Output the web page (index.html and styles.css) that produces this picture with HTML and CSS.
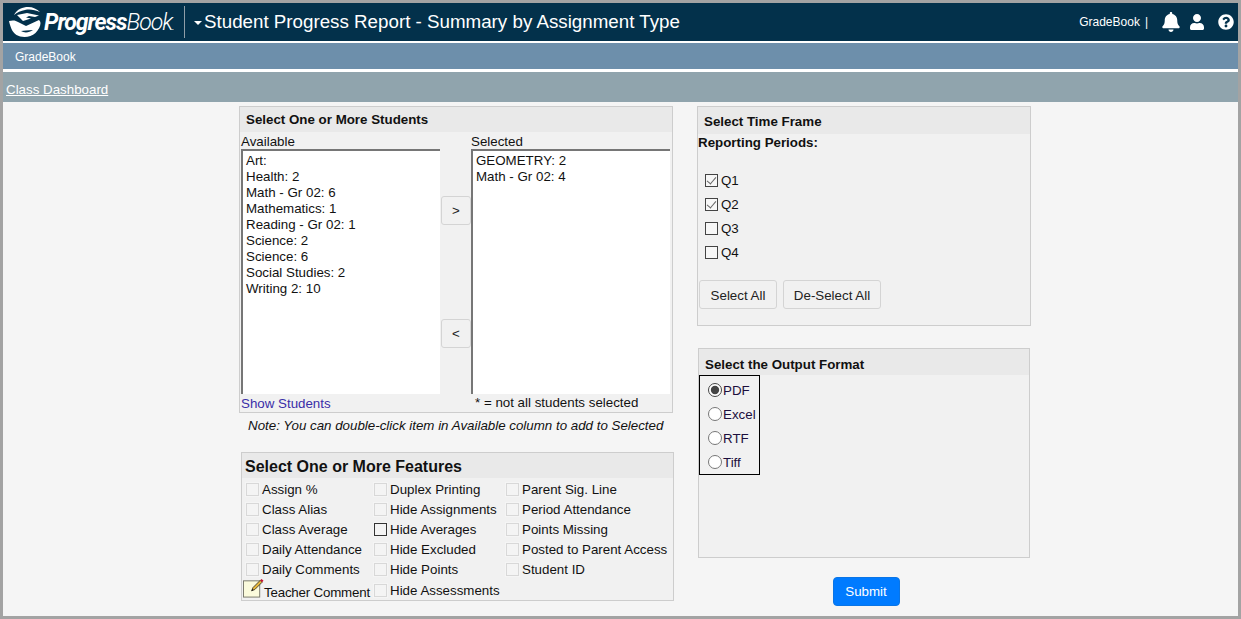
FILE: index.html
```html
<!DOCTYPE html>
<html lang="en">
<head>
    <meta charset="UTF-8">
    <title>Student Progress Report - Summary by Assignment Type</title>
    <link rel="stylesheet" href="styles.css">
</head>
<body>
<div class="page">
    <header class="topbar">
        <div class="logo">
            <svg class="logo-mark" viewBox="0 0 34 32" width="34" height="32">
                <path d="M6 9C9 3 15 1 20 1c5 0 9 2 12 5-5-2-10-3-15-2-4 .8-8 2.500-11 5z" fill="#fff"/>
                <path d="M9 9l10-2 12 2.500-4 1.500-6-1-3 1.500 5 1-8 2.500z" fill="#fff"/>
                <path d="M1 15c4-1 7-.5 9 1l8 4 13-6c1 1 1.500 2 1.500 3 0 3-2 7-5 10-3 2.500-7 4-11 4-6 0-11-3-13-8-1-2.500-2-5.500-2.500-8zm12 10c3 2 8 2 12-1l-7 .5z" fill="#fff" fill-rule="evenodd"/>
            </svg>
            <span class="logo-text"><b>Progress</b>Book<small>.</small></span>
        </div>
        <h1 class="title"><span class="caret"></span>Student Progress Report - Summary by Assignment Type</h1>
        <div class="top-right">
            <span class="app-name">GradeBook</span>
            <span class="sep">|</span>
            <svg class="icon-bell" viewBox="0 0 448 512" width="18" height="20"><path fill="#fff" d="M224 512c35.32 0 63.97-28.65 63.97-64H160.03c0 35.35 28.65 64 63.97 64zm215.39-149.71c-19.32-20.76-55.47-51.99-55.47-154.29 0-77.7-54.48-139.9-127.94-155.16V32c0-17.67-14.32-32-31.98-32s-31.98 14.33-31.98 32v20.84C118.56 68.1 64.08 130.3 64.08 208c0 102.3-36.15 133.53-55.47 154.29-6 6.45-8.66 14.16-8.61 21.71.11 16.4 12.98 32 32.1 32h383.8c19.12 0 32-15.6 32.1-32 .05-7.55-2.61-15.27-8.61-21.71z"/></svg>
            <svg class="icon-user" viewBox="0 0 448 512" width="14" height="16"><path fill="#fff" d="M224 256c70.7 0 128-57.3 128-128S294.7 0 224 0 96 57.3 96 128s57.3 128 128 128zm89.6 32h-16.7c-22.2 10.2-46.9 16-72.9 16s-50.6-5.800-72.900-16h-16.700C60.200 288 0 348.200 0 422.400V464c0 26.500 21.500 48 48 48h352c26.500 0 48-21.500 48-48v-41.600c0-74.200-60.200-134.400-134.400-134.400z"/></svg>
            <svg class="icon-help" viewBox="0 0 512 512" width="16" height="16"><path fill="#fff" d="M504 256c0 136.997-111.043 248-248 248S8 392.997 8 256C8 119.083 119.043 8 256 8s248 111.083 248 248zM262.655 90c-54.497 0-89.255 22.957-116.549 63.758-3.536 5.286-2.353 12.415 2.715 16.258l34.699 26.310c5.205 3.947 12.621 3.008 16.665-2.122 17.864-22.658 30.113-35.797 57.303-35.797 20.429 0 45.698 13.148 45.698 32.958 0 14.976-12.363 22.667-32.534 33.976C247.128 238.528 216 254.941 216 296v4c0 6.627 5.373 12 12 12h56c6.627 0 12-5.373 12-12v-1.333c0-28.462 83.186-29.647 83.186-106.667 0-58.002-60.165-102-116.531-102zM256 338c-25.365 0-46 20.635-46 46 0 25.364 20.635 46 46 46s46-20.636 46-46c0-25.365-20.635-46-46-46z"/></svg>
        </div>
    </header>

    <nav class="subnav">GradeBook</nav>
    <div class="crumb"><a href="#">Class Dashboard</a></div>

    <main class="content">
        <div class="col-left">
            <section class="panel students">
                <div class="panel-head">Select One or More Students</div>
                <div class="picker">
                    <div class="picker-col">
                        <div class="picker-label">Available</div>
                        <div class="listbox">
                            <div>Art:</div>
                            <div>Health: 2</div>
                            <div>Math - Gr 02: 6</div>
                            <div>Mathematics: 1</div>
                            <div>Reading - Gr 02: 1</div>
                            <div>Science: 2</div>
                            <div>Science: 6</div>
                            <div>Social Studies: 2</div>
                            <div>Writing 2: 10</div>
                        </div>
                        <a class="show-link" href="#">Show Students</a>
                    </div>
                    <div class="picker-btns">
                        <button class="btn btn-move">&gt;</button>
                        <button class="btn btn-move">&lt;</button>
                    </div>
                    <div class="picker-col">
                        <div class="picker-label">Selected</div>
                        <div class="listbox">
                            <div>GEOMETRY: 2</div>
                            <div>Math - Gr 02: 4</div>
                        </div>
                        <div class="hint">* = not all students selected</div>
                    </div>
                </div>
            </section>
            <p class="note">Note: You can double-click item in Available column to add to Selected</p>

            <section class="panel features">
                <div class="panel-head head-large">Select One or More Features</div>
                <div class="feature-grid">
                    <label class="feature"><input type="checkbox" class="chk-faint">Assign %</label>
                    <label class="feature"><input type="checkbox" class="chk-faint">Duplex Printing</label>
                    <label class="feature"><input type="checkbox" class="chk-faint">Parent Sig. Line</label>
                    <label class="feature"><input type="checkbox" class="chk-faint">Class Alias</label>
                    <label class="feature"><input type="checkbox" class="chk-faint">Hide Assignments</label>
                    <label class="feature"><input type="checkbox" class="chk-faint">Period Attendance</label>
                    <label class="feature"><input type="checkbox" class="chk-faint">Class Average</label>
                    <label class="feature"><input type="checkbox" class="chk-dark">Hide Averages</label>
                    <label class="feature"><input type="checkbox" class="chk-faint">Points Missing</label>
                    <label class="feature"><input type="checkbox" class="chk-faint">Daily Attendance</label>
                    <label class="feature"><input type="checkbox" class="chk-faint">Hide Excluded</label>
                    <label class="feature"><input type="checkbox" class="chk-faint">Posted to Parent Access</label>
                    <label class="feature"><input type="checkbox" class="chk-faint">Daily Comments</label>
                    <label class="feature"><input type="checkbox" class="chk-faint">Hide Points</label>
                    <label class="feature"><input type="checkbox" class="chk-faint">Student ID</label>
                    <label class="feature feature-note">
                        <svg class="note-icon" viewBox="0 0 22 20" width="21" height="20">
                            <rect x="0.500" y="2.500" width="17" height="17" fill="#fbfbdc" stroke="#77776a"/>
                            <path d="M9 13l1.500-3.500L18 2l2 2-7.500 7.500z" fill="#e8b93a" stroke="#222" stroke-width="0.800"/>
                            <path d="M18 2l1.500-1.500 2 2L20 4z" fill="#c8102e"/>
                            <path d="M9 13l.800-2 1.400 1.200z" fill="#111"/>
                        </svg>Teacher Comment</label>
                    <label class="feature feature-last"><input type="checkbox" class="chk-faint">Hide Assessments</label>
                </div>
            </section>
        </div>

        <div class="col-right">
            <section class="panel timeframe">
                <div class="panel-head head-tall">Select Time Frame</div>
                <div class="period-title">Reporting Periods:</div>
                <div class="period-list">
                    <label class="period"><input type="checkbox" checked>Q1</label>
                    <label class="period"><input type="checkbox" checked>Q2</label>
                    <label class="period"><input type="checkbox">Q3</label>
                    <label class="period"><input type="checkbox">Q4</label>
                </div>
                <div class="period-btns">
                    <button class="btn btn-select">Select All</button>
                    <button class="btn btn-deselect">De-Select All</button>
                </div>
            </section>

            <section class="panel output">
                <div class="panel-head head-output">Select the Output Format</div>
                <div class="radio-box">
                    <label class="radio"><input type="radio" name="fmt" checked>PDF</label>
                    <label class="radio"><input type="radio" name="fmt">Excel</label>
                    <label class="radio"><input type="radio" name="fmt">RTF</label>
                    <label class="radio"><input type="radio" name="fmt">Tiff</label>
                </div>
            </section>

            <div class="submit-row"><button class="btn-submit">Submit</button></div>
        </div>
    </main>
</div>
</body>
</html>
```

FILE: styles.css
```css
* {
    box-sizing: border-box;
}

html, body {
    margin: 0;
    padding: 0;
}

body {
    font-family: "Liberation Sans", Arial, sans-serif;
    font-size: 13.33px;
    color: #111;
    background: #f5f5f5;
}

.page {
    width: 1241px;
    height: 619px;
    border: 3px solid #a3a3a3;
    background: #f5f5f5;
    overflow: hidden;
}

/* top bar */
.topbar {
    height: 38px;
    background: #03314b;
    color: #fff;
    display: flex;
    align-items: center;
}

.logo {
    width: 177px;
    height: 32px;
    margin-left: 5px;
    display: flex;
    align-items: center;
    border-right: 1px solid #8f9ea8;
    flex: none;
}

.logo-mark {
    flex: none;
}

.logo-text {
    margin-left: 2px;
    font-family: Roboto, "Liberation Sans", sans-serif;
    font-size: 23px;
    font-style: italic;
    letter-spacing: -1px;
    font-weight: 300;
    white-space: nowrap;
}

.logo-text b {
    font-weight: 700;
}

.logo-text small {
    font-size: 12px;
}

.title {
    margin: 0 0 0 9px;
    font-size: 18.75px;
    font-weight: 400;
    white-space: nowrap;
    display: flex;
    align-items: center;
}

.caret {
    width: 0;
    height: 0;
    margin-right: 2px;
    margin-top: 2px;
    border-left: 4px solid transparent;
    border-right: 4px solid transparent;
    border-top: 4px solid #fff;
}

.top-right {
    margin-left: auto;
    display: flex;
    align-items: center;
    padding-right: 4px;
    font-size: 12px;
}

.sep {
    margin-left: 5px;
    margin-right: 14px;
}

.icon-bell {
    margin-right: 10px;
}

.icon-user {
    margin-right: 14px;
}

/* sub nav */
.subnav {
    height: 31px;
    border-top: 2px solid #fff;
    border-bottom: 3px solid #fff;
    background: #6d8fab;
    color: #fff;
    font-size: 12px;
    line-height: 28px;
    padding-left: 12px;
}

.crumb {
    height: 30px;
    background: #90a4ad;
    padding: 10px 0 0 3px;
    line-height: 16px;
}

.crumb a {
    color: #fff;
}

/* main layout */
.content {
    display: flex;
    padding: 4px 0 0 236px;
}

.col-left {
    width: 435px;
}

.col-right {
    width: 334px;
    margin-left: 23px;
}

.panel {
    border: 1px solid #cdcdcd;
    background: #f1f1f1;
}

.panel-head {
    height: 25px;
    background: #e9e9e9;
    font-weight: 700;
    line-height: 25px;
    padding-left: 6px;
}

/* students panel */
.students {
    width: 434px;
    height: 307px;
}

.picker {
    display: flex;
    padding-left: 1px;
}

.picker-col {
    width: 199px;
}

.picker-label {
    height: 17px;
    padding-top: 1px;
    line-height: 18px;
}

.listbox {
    height: 245px;
    background: #fff;
    border-top: 2px solid #767676;
    border-left: 2px solid #767676;
    padding: 2px 0 0 3px;
    line-height: 16px;
}

.show-link {
    display: block;
    color: #3a2ea8;
    text-decoration: none;
    line-height: 19px;
}

.hint {
    padding-left: 4px;
    line-height: 18px;
}

.picker-btns {
    width: 31px;
    padding: 64px 0 0 1px;
    flex: none;
}

.btn {
    font-family: inherit;
    font-size: 13.33px;
    color: #222;
    background: #f1f1f1;
    border: 1px solid #d4d4d4;
    border-radius: 3px;
    padding: 1px 0 0;
}

.btn-move {
    display: block;
    width: 30px;
    height: 29px;
    margin-bottom: 94px;
    padding: 0;
}

.note {
    margin: 5px 0 0 9px;
    font-style: italic;
    line-height: 16px;
    white-space: nowrap;
}

/* features panel */
.features {
    width: 433px;
    height: 149px;
    margin: 18px 0 0 2px;
}

.head-large {
    font-size: 16px;
    line-height: 27px;
    padding-left: 3px;
}

.feature-grid {
    display: grid;
    grid-template-columns: 128px 132px 1fr;
    grid-auto-rows: 20px;
    padding: 1px 0 0 4px;
}

.feature {
    display: flex;
    align-items: center;
    white-space: nowrap;
}

.feature input, .period input {
    appearance: none;
    margin: 0 3px 0 0;
    width: 13px;
    height: 13px;
    background: #f4f4f4;
    flex: none;
    outline: 1px solid #f5f5f5;
}

.chk-faint {
    border: 1px solid #d8d8d8;
}

.chk-dark {
    border: 1px solid #333;
}

.feature-note {
    margin-left: -3px;
    padding-top: 6px;
    letter-spacing: -0.2px;
}

.note-icon {
    margin-top: -8px;
    flex: none;
}

.feature-last {
    margin-top: 2px;
}

/* time frame panel */
.timeframe {
    width: 334px;
    height: 220px;
}

.head-tall {
    height: 27px;
    line-height: 30px;
}

.period-title {
    font-weight: 700;
    line-height: 18px;
}

.period-list {
    padding: 16px 0 0 7px;
}

.period {
    display: flex;
    align-items: center;
    height: 24px;
}

.period input {
    position: relative;
    border: 1px solid #444;
    background: #f7f7f7;
    outline: none;
    margin-right: 3px;
}

.period input:checked::after {
    content: "";
    position: absolute;
    left: 3px;
    top: 0;
    width: 4px;
    height: 8px;
    border-right: 1.500px solid #666;
    border-bottom: 1.500px solid #666;
    transform: rotate(40deg);
}

.period-btns {
    display: flex;
    gap: 6px;
    padding: 16px 0 0 1px;
}

.btn-select {
    width: 78px;
    height: 29px;
}

.btn-deselect {
    width: 98px;
    height: 29px;
}

/* output panel */
.output {
    width: 332px;
    height: 210px;
    margin: 22px 0 0 1px;
}

.head-output {
    height: 26px;
    line-height: 31px;
}

.radio-box {
    width: 61px;
    height: 100px;
    background: #f1f1f1;
    border: 1px solid #000;
    padding-top: 2px;
}

.radio {
    display: flex;
    align-items: center;
    height: 24px;
    color: #1c0f3d;
}

.radio input {
    margin: 0 1px 0 8px;
    width: 14px;
    height: 14px;
    accent-color: #444;
}

.submit-row {
    display: flex;
    justify-content: center;
    padding: 19px 0 0 4px;
}

.btn-submit {
    width: 67px;
    height: 29px;
    background: #007bff;
    border: 1px solid #0a75e6;
    border-radius: 4px;
    color: #fff;
    font-family: inherit;
    font-size: 13.33px;
}
```
